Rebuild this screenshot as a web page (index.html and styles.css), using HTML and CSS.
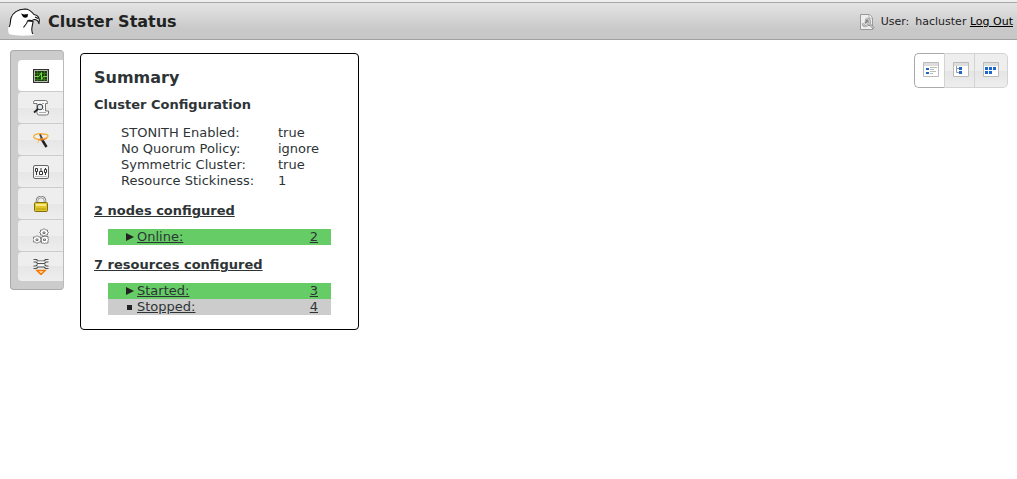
FILE: index.html
```html
<!DOCTYPE html>
<html lang="en">
<head>
<meta charset="utf-8">
<title>Cluster Status</title>
<link rel="stylesheet" href="styles.css">
</head>
<body>
<header class="header">
  <svg class="logo" viewBox="0 0 34 30" aria-hidden="true">
    <path d="M1 27C-1 22 1 19 2 14C3 5 8 2 17 2C22 2 24 5 26 8C30 9 33 11 32 17C30 15 30 13 27 13L25 14C24 18 23 22 26 28C18 29 7 29 1 27Z" fill="#fff"/>
    <path d="M1 20C3 17 2 14 3 11C5 5 9 2.500 17 2C21 2 24 5 26 7.500C30 8 32.500 11 31 17C30.500 14 29 12.500 26 12.500M27 10l3 1.500M26 12.500C23 15 21 12 19.500 14C19 17 17 18 15.500 20.500M20 14l5 .5C25 18 22 23 25 27" fill="none" stroke="#111" stroke-width="1.100"/>
    <path d="M13 6.500l3 1 4-.5-.5 3c-2 1-4 1-5-1z"/>
  </svg>
  <h1 class="title">Cluster Status</h1>
  <div class="user">
    <svg class="icon" viewBox="0 0 16 16" aria-hidden="true">
      <path d="M1.500.5h9l3 3v12h-12z" fill="#eee" stroke="#999"/>
      <path d="M10 .5v3.500h3.500" fill="#fff" stroke="#aaa"/>
      <path d="M7 5c3-1 5 2 3 4.500l5 5M4 9c0 4 4 4 6 .5M7 5l1 2.500L6 9" fill="none" stroke="#888" stroke-width="2.200"/>
      <path d="M7 5c3-1 5 2 3 4.500l5 5M4 9c0 4 4 4 6 .5" fill="none" stroke="#f4f4f4" stroke-width=".9"/>
    </svg>
    <span>User:</span>
    <span>hacluster <a class="logout" href="#">Log Out</a></span>
  </div>
</header>
<div class="layout">
  <nav class="sidebar">
    <a class="tab tab-active" href="#" aria-label="Status"><svg class="icon" viewBox="0 0 16 16"><path d="M0 1h16v14H0z" fill="#333"/><path d="M1.500 2.500h13v11h-13z" fill="#1b420e" stroke="#bbb"/><path d="M2 5.500h12M2 11.500h12M4.500 3v10M11.500 3v10" stroke="#32701b"/><path d="M2 8.500h4l2.500-4v7l2-3H14" fill="none" stroke="#74e040"/></svg></a>
    <a class="tab" href="#" aria-label="History"><svg class="icon" viewBox="0 0 16 16"><path d="M2 .5h10.500q2 0 2 2v1h-2V11h3v2q0 2-2 2H6q-2 0-2-2V3.500H.5v-1Q.5.5 2 .5z" fill="#fafafa" stroke="#777"/><path d="M9 3.500h2M10 9.500h1M6 12.500h7" stroke="#aaa"/><circle cx="7" cy="7" r="2.800" fill="#dfe8ef" stroke="#333"/><path d="M5 9l-4 3.500" stroke="#222" stroke-width="1.800"/></svg></a>
    <a class="tab" href="#" aria-label="Wizard"><svg class="icon" viewBox="0 0 16 16"><path d="M8 6L13.500 15" stroke="#222" stroke-width="2.500"/><path d="M7 2l2 5" stroke="#444" stroke-width="2"/><path d="M12 2.500C8 .5 0 2 .8 5C2 9 15 7 15 4C15 2 12 2 10 2.500" fill="none" stroke="#f8ad3a" stroke-width="1.300"/><path d="M5 8c3 .5 7 0 9-2" fill="none" stroke="#f07818"/><path d="M6.500 8l-2 3" stroke="#fbc46b"/></svg></a>
    <a class="tab" href="#" aria-label="Configuration"><svg class="icon" viewBox="0 0 16 16"><rect x=".5" y="1.500" width="15" height="13" rx="1.500" fill="#f5f5f5" stroke="#666"/><path d="M3.500 4v7M8 4v7M12.500 4v7" stroke="#333"/><path d="M2.500 4.500h2v3h-2zM6.500 7.500h3v3h-3zM11.500 5.500h2v3h-2z" fill="#fff" stroke="#333"/><path d="M2 12.500h12" stroke="#bbb"/></svg></a>
    <a class="tab" href="#" aria-label="Access control"><svg class="icon" viewBox="0 0 16 16"><path d="M4 8V5q0-4 4-4t4 4v3" fill="none" stroke="#888" stroke-width="2.500"/><path d="M4 8V5q0-4 4-4t4 4v3" fill="none" stroke="#ddd"/><rect x="1.500" y="6.500" width="13" height="9" rx="1" fill="#dfc52a" stroke="#81700b"/><path d="M3 8h10v2H3z" fill="#f8eb83"/><path d="M3 13h10" stroke="#b99b0d"/></svg></a>
    <a class="tab" href="#" aria-label="Resources"><svg class="icon" viewBox="0 0 16 16"><path d="M11 .5l1.500 1.500h2v2l1 .5-1 1v1.500h-2L11 8.500 9.500 7h-2V5l-1-.5 1-.5V2h2zM4 7.500L5.500 9h2v2l1 .5-1 1V14h-2L4 15.500 2.500 14h-2v-1.500L0 11.500.5 11V9h2zM9 8.500h2l.5-1 1 1H15v2l.5 1-.5 1V15h-2.500l-1 .5-.5-.5H8.500v-2.500l-.5-1 .5-.5z" fill="#fff" stroke="#666" stroke-width=".8"/><path d="M10 4h2v1.500h-2zM3 11h2v1.500H3zM10.500 11h2v1.500h-2z" fill="#fff" stroke="#555" stroke-width=".8"/></svg></a>
    <a class="tab" href="#" aria-label="Tools"><svg class="icon" viewBox="0 0 16 16"><path d="M.5.5h3L5 2h6l1.500-1.500h3M.5 3h2.500l1.500 1.500h7L13 3h2.500M.5 7H3l1.500-1.500M15.500 7H13l-1.500-1.500M.5 9.500h3L5 8h6l1.500 1.500h3" fill="none" stroke="#555" stroke-width="1.200"/><path d="M5 3h6M5 6.500h6" stroke="#fff"/><path d="M4 11.500h8L8 15.500z" fill="#ffe5c4" stroke="#f57900" stroke-width="1.500"/></svg></a>
  </nav>
  <main class="summary">
    <h2 class="summary-title">Summary</h2>
    <h3 class="section-title">Cluster Configuration</h3>
    <table class="config">
      <tr><th scope="row">STONITH Enabled:</th><td>true</td></tr>
      <tr><th scope="row">No Quorum Policy:</th><td>ignore</td></tr>
      <tr><th scope="row">Symmetric Cluster:</th><td>true</td></tr>
      <tr><th scope="row">Resource Stickiness:</th><td>1</td></tr>
    </table>
    <h3 class="section-title"><a href="#">2 nodes configured</a></h3>
    <div class="states">
      <div class="state state-ok"><svg class="marker" viewBox="0 0 9 8"><path d="M1 0l8 4-8 4z"/></svg><a href="#">Online:</a><a class="count" href="#">2</a></div>
    </div>
    <h3 class="section-title"><a href="#">7 resources configured</a></h3>
    <div class="states">
      <div class="state state-ok"><svg class="marker" viewBox="0 0 9 8"><path d="M1 0l8 4-8 4z"/></svg><a href="#">Started:</a><a class="count" href="#">3</a></div>
      <div class="state state-off"><svg class="marker" viewBox="0 0 9 8"><path d="M2 2h5v5H2z"/></svg><a href="#">Stopped:</a><a class="count" href="#">4</a></div>
    </div>
  </main>
  <div class="views">
    <button class="view view-active" type="button" aria-label="Summary view"><svg class="icon" viewBox="0 0 16 16"><path d="M.5.5h15v14H.5z" fill="#fff" stroke="#bbb"/><path d="M1 1h14v3H1z" fill="#ddd"/><path d="M3 6h3v2H3zM3 10h3v2H3z" fill="#1c66d0"/><path d="M7 5.500h7M7 7.500h4M7 9.500h6M7 11.500h3" stroke="#bbb"/></svg></button>
    <button class="view" type="button" aria-label="Tree view"><svg class="icon" viewBox="0 0 16 16"><path d="M.5.5h15v14H.5z" fill="#fff" stroke="#bbb"/><path d="M1 1h14v3H1z" fill="#ddd"/><path d="M6 5h3v3H6zM6 9h3v3H6z" fill="#1c66d0"/><path d="M3.500 4v6.500H6M3.500 6.500H6" fill="none" stroke="#999"/></svg></button>
    <button class="view" type="button" aria-label="Grid view"><svg class="icon" viewBox="0 0 16 16"><path d="M.5.500h15v14H.5z" fill="#fff" stroke="#bbb"/><path d="M1 1h14v3H1z" fill="#ddd"/><path d="M2 5h3v3H2zM6 5h3v3H6zM10 5h3v3h-3zM2 9h3v3H2zM6 9h3v3H6z" fill="#1c66d0"/></svg></button>
  </div>
</div>
</body>
</html>
```
FILE: styles.css
```css
* { box-sizing: border-box; }
html { background: #fff linear-gradient(#eee, #eee) no-repeat 0 0 / 100% 2px; }
body {
  margin: 0;
  color: #2e3436;
  font: 13px/16px "DejaVu Sans", sans-serif;
}
a { color: inherit; }
.icon { display: block; width: 16px; height: 16px; flex: none; }
.header {
  display: flex;
  align-items: center;
  height: 38px;
  margin-top: 2px;
  padding: 1px 4px 0 8px;
  border-top: 1px solid #a6a6a6;
  border-bottom: 1px solid #a0a0a0;
  background: linear-gradient(#e4e4e4, #c8c8c8 75%);
  color: #222;
}
.logo { width: 34px; height: 30px; }
.title { margin: 0 auto 0 6px; font-size: 16px; line-height: 20px; }
.user { display: flex; align-items: center; gap: 6px; font-size: 11px; }
.logout { color: #000; }
.layout { display: flex; align-items: flex-start; padding: 10px 9px 10px 10px; }
.sidebar {
  width: 54px;
  padding: 9px 0 7px 7px;
  border: 1px solid #aaa;
  border-radius: 4px;
  border-right-color: #bbb;
  background: #ccc;
}
.tab {
  display: flex;
  align-items: center;
  justify-content: center;
  height: 32px;
  border-bottom: 1px solid #ccc;
  border-radius: 4px 0 0 4px;
  background: linear-gradient(#eee 50%, #e6e6e6 50%, #eee);
}
.tab:last-child { height: 30px; }
.tab-active { background: #fff; }
.summary {
  flex: 0 1 279px;
  margin: 3px 0 0 16px;
  padding: 14px 13px;
  border: 1px solid #000;
  border-radius: 4px;
}
.summary-title { margin: 0 0 9px; font-size: 16px; line-height: 20px; }
.section-title { margin: 0 0 10px; font-size: 13px; line-height: 16px; }
.config { margin: 12px 0 14px 27px; border-collapse: collapse; }
.config th { width: 157px; padding: 0; font-weight: normal; text-align: left; }
.config td { padding: 0; }
.states { margin: 0 14px 12px; }
.states:last-child { margin-bottom: 0; }
.state { display: flex; align-items: center; padding: 0 13px 0 17px; }
.state-ok { background: #6c6; }
.state-off { background: #ccc; }
.marker { width: 9px; height: 8px; margin-right: 3px; fill: #222; }
.count { margin-left: auto; }
.views {
  display: flex;
  margin: 3px 0 0 auto;
}
.view {
  display: flex;
  align-items: center;
  justify-content: center;
  width: 30px;
  height: 35px;
  padding: 0 0 1px 2px;
  border: 1px solid #d3d3d3;
  border-left-width: 0;
  background: linear-gradient(#eee 50%, #e4e4e4 50%, #eee);
}
.view:last-child { width: 33px; padding-left: 0; border-radius: 0 5px 5px 0; }
.view-active {
  width: 31px;
  border: 1px solid #aaa;
  border-right-color: #d3d3d3;
  border-radius: 5px 0 0 5px;
  background: #fff;
}
```
